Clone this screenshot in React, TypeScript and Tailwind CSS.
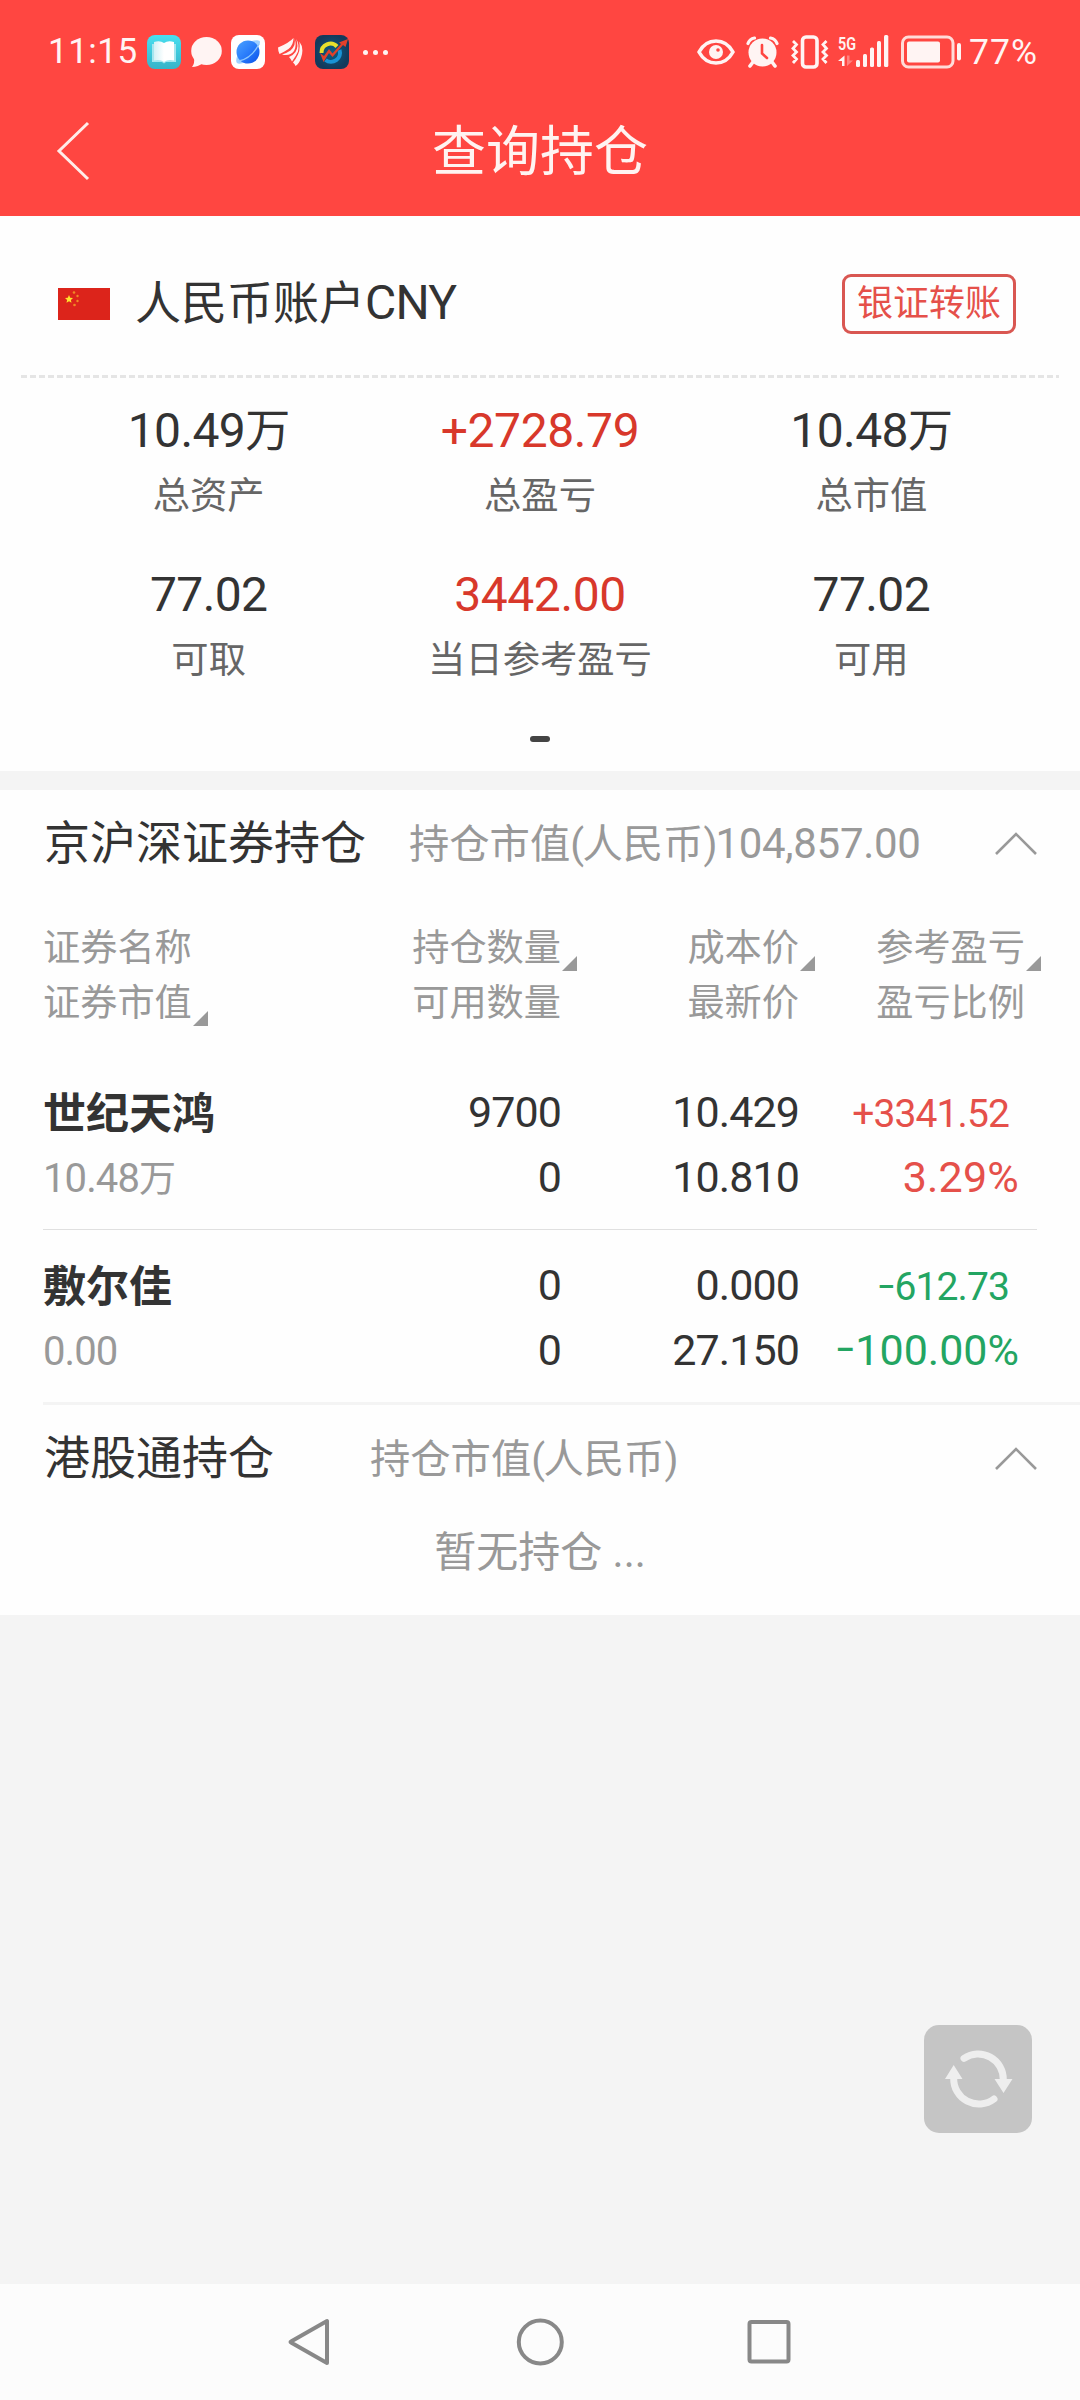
import React from 'react';

function StatusBar() {
  return (
    <div className="flex h-[90px] items-center justify-between pt-[14px] pr-[42px] pl-[48px] text-[#fff4f3]">
      <div className="flex items-center">
        <span className="w-[99px] text-[35px] leading-[40px] tracking-[0.5px]">11:15</span>
        <svg width="34" height="34" viewBox="0 0 34 34">
          <defs>
            <linearGradient id="book" x1="0" y1="0" x2="0" y2="1">
              <stop offset="0" stopColor="#48dff0" />
              <stop offset="1" stopColor="#36b3c8" />
            </linearGradient>
            <linearGradient id="page" x1="0" y1="0" x2="1" y2="0">
              <stop offset="0" stopColor="#d3f1f6" />
              <stop offset="1" stopColor="#ffffff" />
            </linearGradient>
          </defs>
          <rect width="34" height="34" rx="8" fill="url(#book)" />
          <path d="M5 9h24v18H19l-2 1.5-2-1.5H5z" fill="#a5e6ef" />
          <path d="M7 7q6-2 10 1v19q-4-3-10-1.500z" fill="url(#page)" />
          <path d="M27 7q-6-2-10 1v19q4-3 10-1.500z" fill="#fff" />
        </svg>
        <svg className="ml-[10px]" width="31" height="34" viewBox="0 0 31 34" fill="currentColor">
          <ellipse cx="15.500" cy="16" rx="15.300" ry="14" />
          <path d="M3 23q1 5-2 9 6 0 11-4z" />
        </svg>
        <svg className="ml-[9px]" width="34" height="34" viewBox="0 0 34 34">
          <defs>
            <linearGradient id="globe" x1="0" y1="0" x2="1" y2="1">
              <stop offset="0" stopColor="#4ba2ff" />
              <stop offset="0.500" stopColor="#2a7dfb" />
              <stop offset="1" stopColor="#0a50e8" />
            </linearGradient>
          </defs>
          <rect width="34" height="34" rx="8" fill="#fff" />
          <path d="M21 6q8-2 8 1t-4 8zM7 19q-3 7-1 9t9-1z" fill="#9fd0ff" />
          <circle cx="17" cy="17" r="11.500" fill="url(#globe)" />
          <path d="M8 26Q21 23 28 9" fill="none" stroke="#8cc8ff" strokeWidth="1.300" />
        </svg>
        <svg className="ml-[13px]" width="25" height="28" viewBox="0 0 25 28" fill="currentColor">
          <path d="M0 9.500Q11 5 15.500 0 15.500 7 10.500 11 6 14 1.500 16 0 13 0 9.500z" />
          <path d="M16.500 0Q18.500 7 12.500 12.500 9 15 4 16.500 12 18.500 16 13 19 8 16.500 0z" />
          <path d="M18.200 1Q21 8 17.500 14 15 17.500 11 19 13 21 14 23.500 18 18 20 13.500 21.500 6 18.200 1z" />
          <path d="M21.300 3.500Q22.500 11 20 16.500 18 21 15 24.500 17 26 17.500 28 21 26 23 20 26.500 10 21.300 3.500z" />
        </svg>
        <svg className="ml-[12px]" width="34" height="34" viewBox="0 0 34 34">
          <defs>
            <radialGradient id="navy">
              <stop offset="0" stopColor="#0b5f86" />
              <stop offset="1" stopColor="#133a5c" />
            </radialGradient>
          </defs>
          <rect width="34" height="34" rx="8" fill="url(#navy)" />
          <path d="M6.500 18A9 9 0 0 1 22 11.500" fill="none" stroke="#e8e02c" strokeWidth="4" />
          <path d="M24.500 15A9 9 0 0 1 10.500 25" fill="none" stroke="#1a93d6" strokeWidth="4" />
          <path d="M5 18 8.500 27 14 18l3.500 4L28 10l2.500 2L33 4 24 7.500l2 1.500-8.500 9.500L14 14l-5 7z" fill="#e2402a" />
        </svg>
        <span className="ml-[14px] flex gap-[5px]">
          <i className="size-[5px] rounded-full bg-[#fff4f3]" />
          <i className="size-[5px] rounded-full bg-[#fff4f3]" />
          <i className="size-[5px] rounded-full bg-[#fff4f3]" />
        </span>
      </div>
      <div className="flex items-center">
        <svg width="38" height="26" viewBox="0 0 38 26" fill="none" stroke="currentColor" strokeWidth="3.600">
          <path d="M2 13Q8 2 19 2t17 11Q30 24 19 24T2 13z" strokeLinejoin="round" />
          <circle cx="19" cy="13" r="7" fill="currentColor" stroke="none" />
          <circle cx="21" cy="11" r="1.800" fill="#ff4641" stroke="none" />
        </svg>
        <svg className="ml-[11px]" width="33" height="32" viewBox="0 0 33 32" fill="none" stroke="currentColor" strokeLinecap="round">
          <circle cx="16.500" cy="16.500" r="14" fill="currentColor" stroke="none" />
          <path d="M2 7.500Q3.500 3 8.500 2M31 7.500Q29.500 3 24.500 2" strokeWidth="3.200" />
          <path d="M7 26 4 30M26 26l3 4" strokeWidth="3.600" />
          <path d="M16 9v8.500l5 4.500" stroke="#ff4641" strokeWidth="2.600" />
        </svg>
        <svg className="ml-[12px]" width="38" height="34" viewBox="0 0 38 34" fill="none" stroke="currentColor">
          <rect x="11.500" y="2" width="14.500" height="30" rx="3.500" strokeWidth="3.600" />
          <path
            d="M2 6 5.500 9.500 2 13.500 5.500 17 2 20.500 5.500 24 2 28M35.500 6 32 9.500l3.500 4L32 17l3.500 3.500L32 24l3.500 4"
            strokeWidth="2.800"
          />
        </svg>
        <svg className="ml-[9px] overflow-visible" width="51" height="34" viewBox="0 0 51 34" fill="currentColor">
          <text x="0" y="14.500" fontSize="18" fontWeight="600" textLength="18" lengthAdjust="spacingAndGlyphs">
            5G
          </text>
          <path d="M6.500 20.500V31H4v-5H0z" />
          <path d="M9 20.500V31l6-5.500h-3.500v-5z" opacity="0.350" />
          <rect x="18" y="25" width="4" height="7" rx="1.500" />
          <rect x="25" y="19" width="4" height="13" rx="1.500" />
          <rect x="32" y="12.500" width="4" height="19.500" rx="1.500" />
          <rect x="39" y="6" width="4" height="26" rx="1.500" />
          <rect x="46" y="0" width="4.300" height="32" rx="1.500" />
        </svg>
        <svg className="ml-[12px]" width="61" height="34" viewBox="0 0 61 34" fill="currentColor">
          <rect x="1.500" y="2" width="50.500" height="30" rx="6" fill="none" stroke="#ffdcd9" strokeWidth="3" />
          <rect x="6" y="6.500" width="33" height="21" rx="2" />
          <rect x="56" y="8" width="4" height="17.500" rx="2" />
        </svg>
        <span className="ml-[7px] text-[35.500px] leading-[40px] tracking-[1px]">77%</span>
      </div>
    </div>
  );
}

function Header() {
  return (
    <header className="h-[216px] bg-[#ff4641]">
      <StatusBar />
      <div className="grid h-[126px] grid-cols-[1fr_auto_1fr] items-center px-[56px]">
        <svg className="-mt-[4px]" width="34" height="60" viewBox="0 0 34 60" fill="none" stroke="#ffece9" strokeWidth="3">
          <path d="M32 2 3 30l29 28" />
        </svg>
        <h1 className="text-[54px] leading-[60px] text-[#fff3f1]">查询持仓</h1>
      </div>
    </header>
  );
}

function Flag() {
  return (
    <svg width="52" height="32" viewBox="0 0 52 32">
      <rect width="52" height="32" fill="#dc241b" />
      <path d="M11 7l1.200 2.700 2.800.3-2.100 1.900.6 2.900L11 13.300l-2.500 1.500.6-2.900L7 10l2.800-.3z" fill="#ffe22e" />
      <g fill="#f08a25">
        <circle cx="16" cy="4.500" r="1.300" />
        <circle cx="19.500" cy="8" r="1.200" />
        <circle cx="19.500" cy="13" r="1.200" />
        <circle cx="16.500" cy="17" r="1.300" />
      </g>
    </svg>
  );
}

type Stat = { value: string; unit?: string; label: string; red?: boolean };

const stats: Stat[] = [
  { value: '10.49', unit: '万', label: '总资产' },
  { value: '+2728.79', label: '总盈亏', red: true },
  { value: '10.48', unit: '万', label: '总市值' },
  { value: '77.02', label: '可取' },
  { value: '3442.00', label: '当日参考盈亏', red: true },
  { value: '77.02', label: '可用' },
];

function Account() {
  return (
    <section className="h-[555px] bg-[#fefefe]">
      <div className="flex h-[159px] items-center pt-[17px] pr-[64px] pl-[58px]">
        <Flag />
        <h2 className="mb-[3px] ml-[25px] text-[46px] leading-[60px]">
          人民币账户<span className="text-[48px] leading-[1px] tracking-[-0.800px]">CNY</span>
        </h2>
        <button className="ml-auto h-[60px] w-[174px] rounded-[9px] border-[3px] border-[#d95752] text-[36px] leading-[54px] text-[#e5504a]">
          银证转账
        </button>
      </div>
      <div className="mx-[21px] h-[3px] bg-[repeating-linear-gradient(90deg,#e5e5e5_0_6px,transparent_6px_9px)]" />
      <div className="grid grid-cols-3 gap-y-[44px] px-[43px] pt-[23px] text-center">
        {stats.map((s, i) => (
          <div key={i}>
            <div
              className={
                s.red
                  ? 'text-[48px] leading-[60px] tracking-[-0.4px] text-[#d8382b]'
                  : 'text-[48px] leading-[60px] tracking-[-0.600px]'
              }
            >
              {s.value}
              {s.unit && <span className="text-[45px] leading-[1px]">{s.unit}</span>}
            </div>
            <div className="mt-[11px] text-[37.300px] leading-[49px] text-[#666]">{s.label}</div>
          </div>
        ))}
      </div>
      <div className="mx-auto mt-[51px] h-[6px] w-[20px] rounded-[3px] bg-[#444]" />
    </section>
  );
}

function SectionHead({ title, children, gap }: { title: string; children?: React.ReactNode; gap: string }) {
  return (
    <div className="flex h-[108px] items-start pr-[43px] pl-[44px]">
      <h2 className="text-[46px] leading-[106px]">{title}</h2>
      <div className={gap + ' text-[40.300px] leading-[110px] text-[#999]'}>
        持仓市值<span className="tracking-[-1.500px]">(</span>人民币<span className="tracking-[-2px]">)</span>
        {children}
      </div>
      <svg className="mt-[42px] ml-auto" width="42" height="23" viewBox="0 0 42 23" fill="none" stroke="#999" strokeWidth="2.600">
        <path d="M1 22 21 2l20 20" />
      </svg>
    </div>
  );
}

function Head({ children, sort }: { children: string; sort?: boolean }) {
  return (
    <span className="relative">
      {children}
      {sort && (
        <svg className="absolute -right-[16px] bottom-[-1px]" width="15" height="15" viewBox="0 0 15 15">
          <path d="M15 0v15H0z" fill="#999" />
        </svg>
      )}
    </span>
  );
}

const holdings = [
  { name: '世纪天鸿', value: '10.48', unit: '万', qty: '9700', avail: '0', cost: '10.429', price: '10.810', pl: '+3341.52', ratio: '3.29%', up: true },
  { name: '敷尔佳', value: '0.00', unit: '', qty: '0', avail: '0', cost: '0.000', price: '27.150', pl: '-612.73', ratio: '-100.00%', up: false },
];

/* Draws a negative number with a short dash set at the height of a minus sign. */
function Signed({ text }: { text: string }) {
  if (!text.startsWith('-')) return <>{text}</>;
  return (
    <>
      <span className="inline-block origin-right scale-x-[0.7]">–</span>
      {text.slice(1)}
    </>
  );
}

function Holdings() {
  return (
    <section className="bg-[#fefefe]">
      <SectionHead title="京沪深证券持仓" gap="ml-[43px]">
        <span className="text-[42px] leading-[1px] tracking-[-0.300px]">104,857.00</span>
      </SectionHead>
      <div className="px-[43px] pt-[23px] pb-[26px] text-[37.200px] leading-[55px] text-[#999]">
        <div className="grid grid-cols-[258px_260px_238px_238px] text-right">
          <div className="text-left"><Head>证券名称</Head></div>
          <div><Head sort>持仓数量</Head></div>
          <div><Head sort>成本价</Head></div>
          <div className="pr-[12px]"><Head sort>参考盈亏</Head></div>
          <div className="text-left"><Head sort>证券市值</Head></div>
          <div>可用数量</div>
          <div>最新价</div>
          <div className="pr-[12px]">盈亏比例</div>
        </div>
      </div>
      {holdings.map((h, i) => (
        <div
          key={h.name}
          className={
            i === 0
              ? 'mx-[43px] h-[173px] border-b border-[#e0e0e0] pt-[23px]'
              : 'ml-[43px] h-[175px] border-b-[3px] border-[#f4f4f4] pt-[23px]'
          }
        >
          <div className="grid h-[65px] grid-cols-[258px_260px_238px_238px] items-baseline text-right text-[43px] leading-[65px] tracking-[-0.900px]">
            <b className="self-start pt-[2px] text-left tracking-normal">{h.name}</b>
            <span>{h.qty}</span>
            <span>{h.cost}</span>
            <span className={h.up ? 'pr-[28px] text-[39px] text-[#e5504a]' : 'pr-[28px] text-[39px] text-[#23a562]'}>
              <Signed text={h.pl} />
            </span>
          </div>
          <div className="grid h-[65px] grid-cols-[258px_260px_238px_238px] items-baseline text-right text-[43px] leading-[65px] tracking-[-0.900px]">
            <span className="text-left text-[40px] text-[#999]">
              {h.value}
              <span className="text-[37px] leading-[1px]">{h.unit}</span>
            </span>
            <span>{h.avail}</span>
            <span>{h.price}</span>
            <span className={h.up ? 'pr-[18px] tracking-[0.200px] text-[#e5504a]' : 'pr-[18px] tracking-[0px] text-[#23a562]'}>
              <Signed text={h.ratio} />
            </span>
          </div>
        </div>
      ))}
      <SectionHead title="港股通持仓" gap="ml-[96px]" />
      <div className="h-[102px] pt-[10px] text-center text-[42px] leading-[60px] text-[#999]">暂无持仓 ...</div>
    </section>
  );
}

function NavBar() {
  return (
    <nav className="flex h-[116px] justify-between bg-[#fcfcfc] pt-[32px] pr-[287px] pl-[286px]">
      <svg width="50" height="52" viewBox="0 0 50 52" fill="none" stroke="#888" strokeWidth="4" strokeLinejoin="round">
        <path d="M41 5v42L5 26.500q-1-.5 0-1z" />
      </svg>
      <svg width="52" height="52" viewBox="0 0 52 52" fill="none" stroke="#888" strokeWidth="4">
        <circle cx="25.300" cy="26" r="21.500" />
      </svg>
      <svg width="48" height="52" viewBox="0 0 48 52" fill="none" stroke="#888" strokeWidth="4">
        <rect x="4.500" y="6" width="39" height="39.500" rx="2" />
      </svg>
    </nav>
  );
}

export default function App() {
  return (
    <div className="relative flex h-[2400px] w-[1080px] flex-col overflow-hidden bg-[#f4f4f4] font-[Roboto,'Noto_Sans_CJK_SC',sans-serif] text-[#333]">
      <Header />
      <Account />
      <div className="h-[19px]" />
      <Holdings />
      <div className="flex-1" />
      <button className="absolute top-[2025px] right-[48px] flex size-[108px] items-center justify-center rounded-[15px] bg-[#c5c5c5]">
        <svg width="70" height="60" viewBox="-1 0 70 60" fill="none" stroke="#eee" strokeWidth="7" strokeLinecap="round">
          <path d="M20 9.300A25.200 25.200 0 0 1 59.300 31" />
          <path d="M50 50A25.200 25.200 0 0 1 9.700 29" />
          <path d="M50.500 30h18L59.500 44z M1 30h17.500L9.700 16z" fill="#eee" stroke="none" />
        </svg>
      </button>
      <NavBar />
    </div>
  );
}
